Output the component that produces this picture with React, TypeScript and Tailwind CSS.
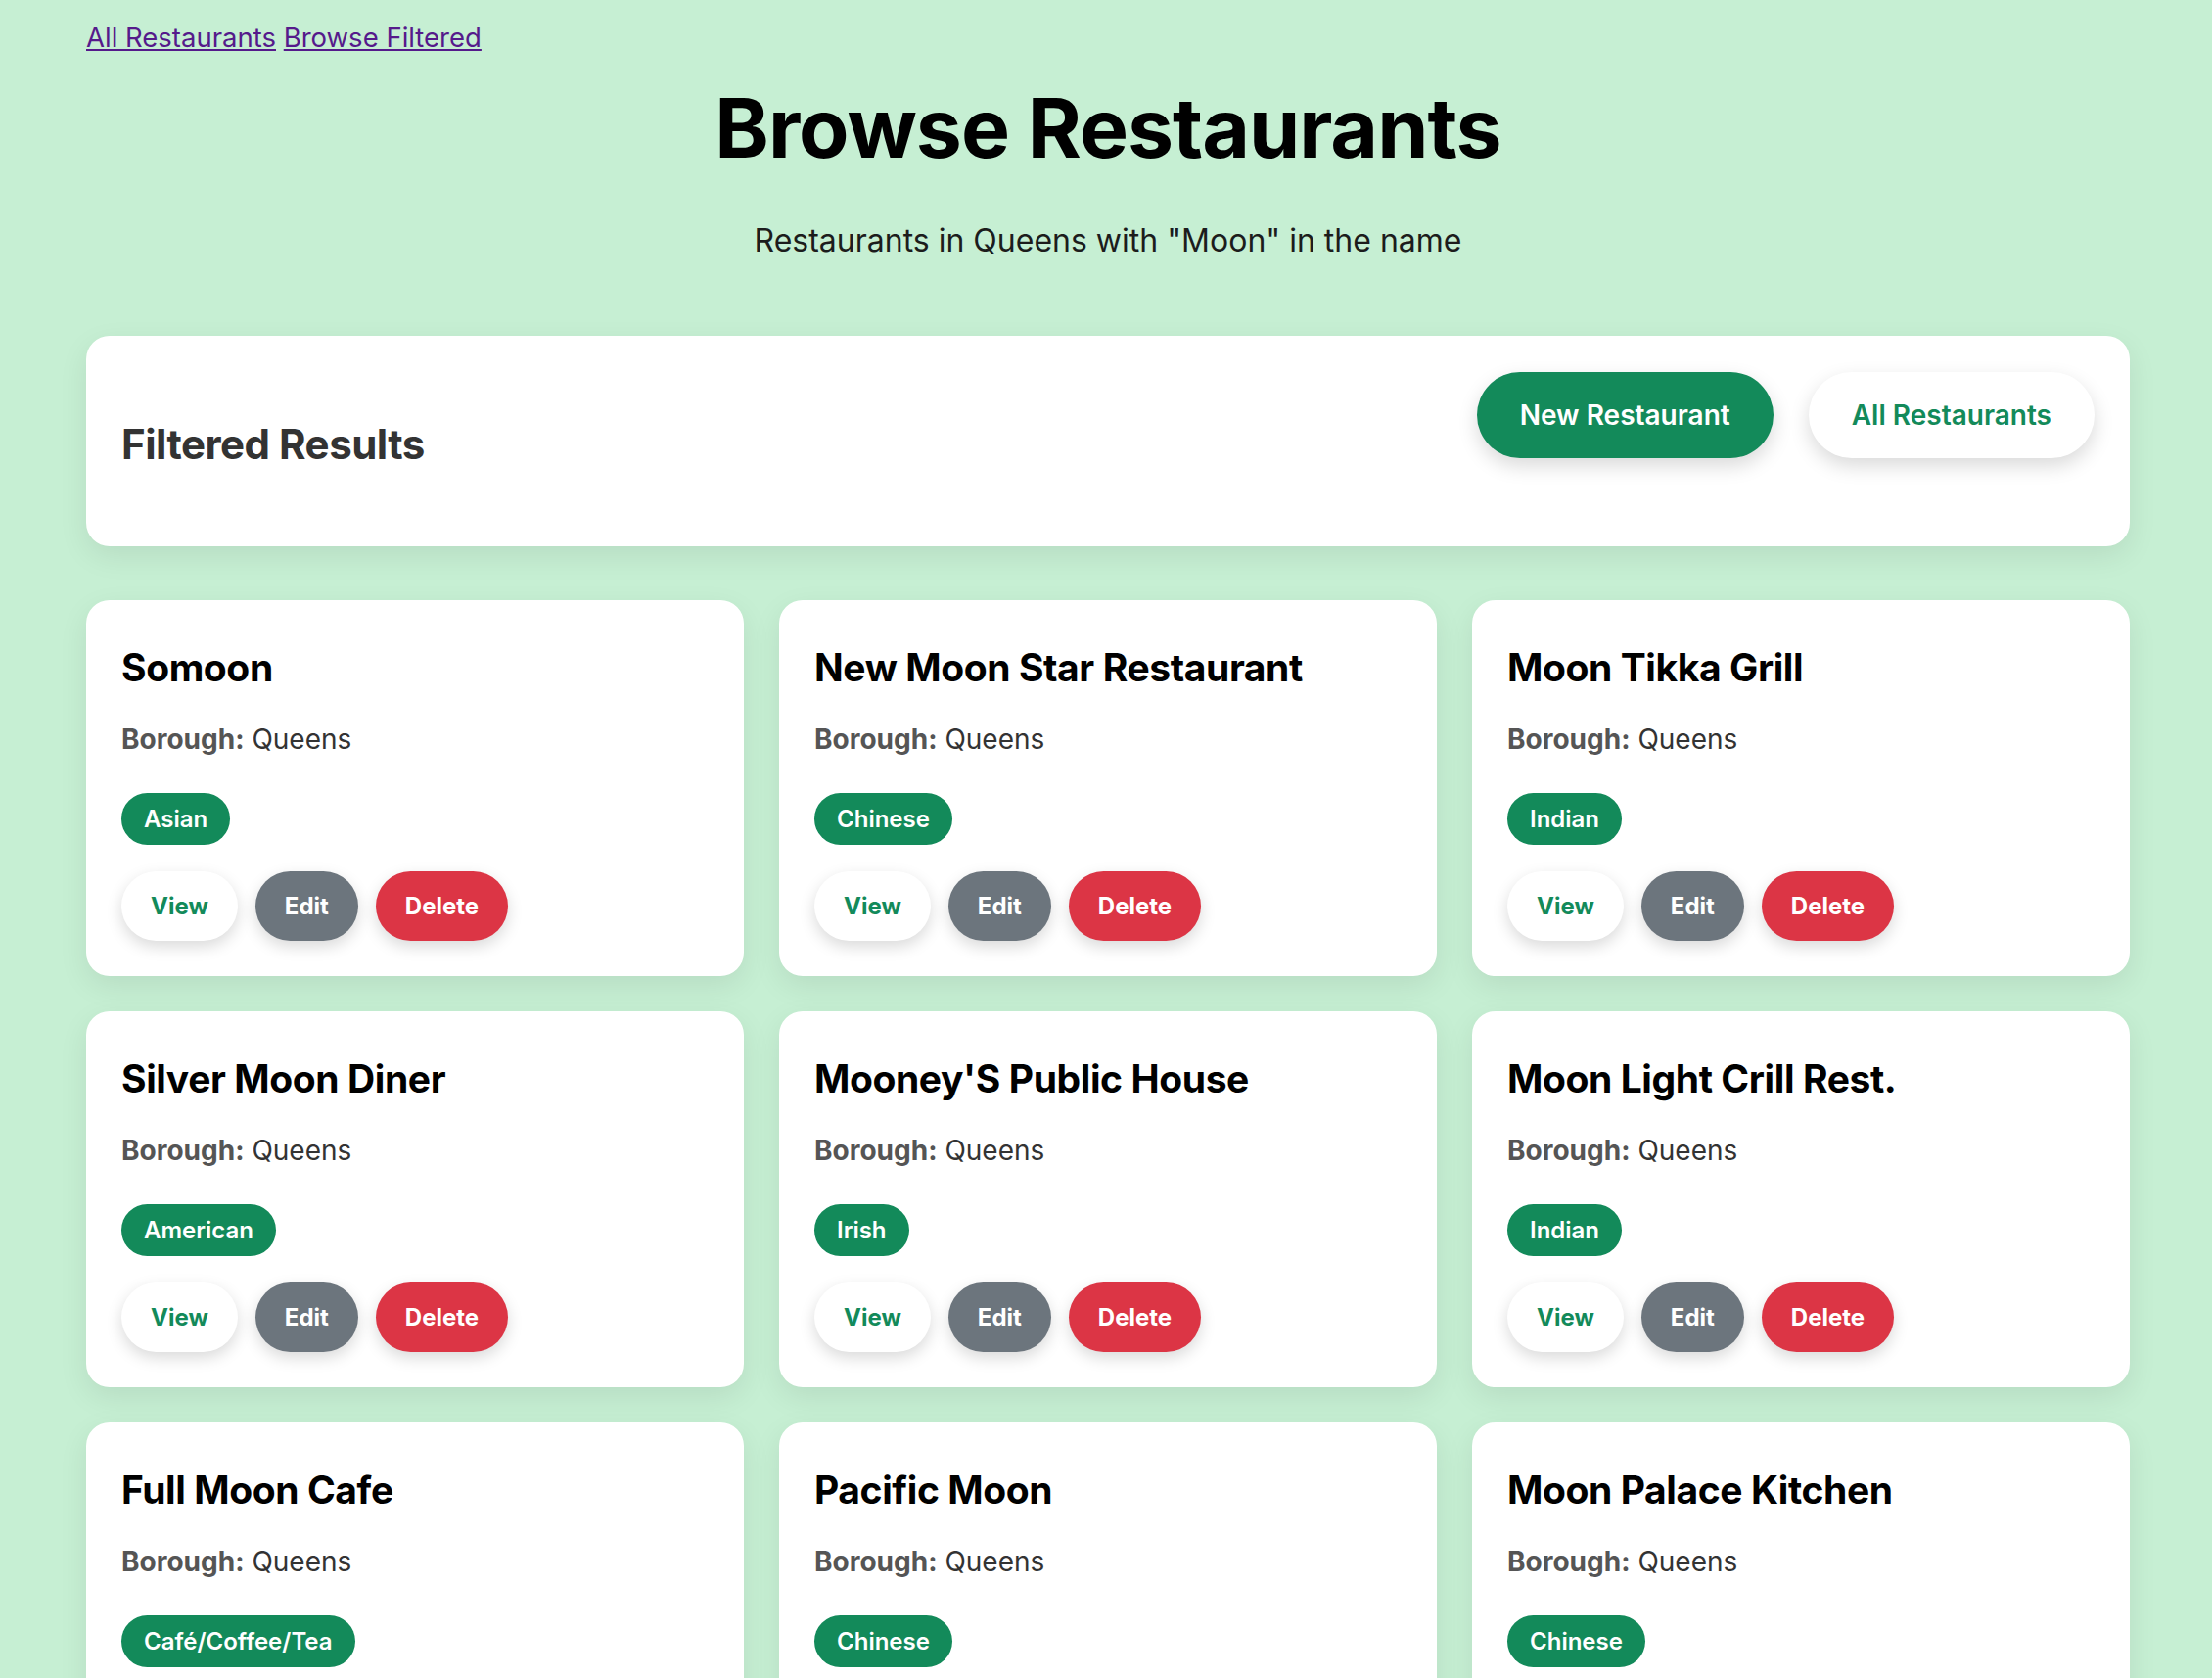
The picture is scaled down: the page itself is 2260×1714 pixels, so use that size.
import React from "react";

type R = { name: string; cuisine: string };

const restaurants: R[] = [
  { name: "Somoon", cuisine: "Asian" },
  { name: "New Moon Star Restaurant", cuisine: "Chinese" },
  { name: "Moon Tikka Grill", cuisine: "Indian" },
  { name: "Silver Moon Diner", cuisine: "American" },
  { name: "Mooney'S Public House", cuisine: "Irish" },
  { name: "Moon Light Crill Rest.", cuisine: "Indian" },
  { name: "Full Moon Cafe", cuisine: "Café/Coffee/Tea" },
  { name: "Pacific Moon", cuisine: "Chinese" },
  { name: "Moon Palace Kitchen", cuisine: "Chinese" },
];

function Card({ r }: { r: R }) {
  return (
    <div className="bg-white rounded-[24px] px-[36px] pt-[45px] pb-[36px] shadow-[0_10px_30px_rgba(0,0,0,0.08)]">
      <h3 className="text-[39px] leading-[48px] font-bold text-black tracking-[-0.4px]">{r.name}</h3>
      <p className="mt-[28px] text-[28px] leading-[42px] text-[#333]">
        <strong className="font-bold text-[#555]">Borough:</strong> Queens
      </p>
      <div className="mt-[34px] flex">
        <span className="inline-flex items-center h-[53px] px-[23px] rounded-full bg-[#138a5a] text-white text-[24px] font-semibold">
          {r.cuisine}
        </span>
      </div>
      <div className="mt-[27px] flex gap-[18px]">
        <button className="h-[71px] px-[30px] rounded-full bg-white text-[#138a5a] text-[24px] font-bold shadow-[0_6px_16px_rgba(0,0,0,0.15)]">
          View
        </button>
        <button className="h-[71px] px-[30px] rounded-full bg-[#6c757d] text-white text-[24px] font-bold shadow-[0_6px_16px_rgba(0,0,0,0.15)]">
          Edit
        </button>
        <button className="h-[71px] px-[30px] rounded-full bg-[#dc3545] text-white text-[24px] font-bold shadow-[0_6px_16px_rgba(0,0,0,0.15)]">
          Delete
        </button>
      </div>
    </div>
  );
}

export default function App() {
  return (
    <div className="min-h-screen bg-[#c6efd3] font-['Inter',sans-serif] pt-[17px] pb-[60px]">
      <div className="ml-[88px] w-[2088px]">
        <nav className="text-[27.5px] leading-[42px]">
          <a href="#" className="underline text-[#551a8b]">All Restaurants</a>{" "}
          <a href="#" className="underline text-[#551a8b]">Browse Filtered</a>
        </nav>
        <h1 className="mt-[21px] text-center text-[84px] leading-[101px] font-bold text-black tracking-[-1px]">
          Browse Restaurants
        </h1>
        <p className="mt-[43px] text-center text-[32px] leading-[43px] text-[#1c1c1c]">
          Restaurants in Queens with "Moon" in the name
        </p>
        <div className="mt-[76px] h-[215px] bg-white rounded-[24px] shadow-[0_10px_30px_rgba(0,0,0,0.08)] px-[36px] pt-[37px] flex justify-between items-start">
          <h2 className="mt-[50px] text-[42px] leading-[48px] font-bold text-[#333] tracking-[-0.5px]">Filtered Results</h2>
          <div className="flex gap-[36px]">
            <button className="h-[88px] px-[44px] rounded-full bg-[#138a5a] text-white text-[28px] font-semibold shadow-[0_8px_20px_rgba(0,0,0,0.15)]">
              New Restaurant
            </button>
            <button className="h-[88px] px-[44px] rounded-full bg-white text-[#138a5a] text-[28px] font-semibold shadow-[0_8px_20px_rgba(0,0,0,0.15)]">
              All Restaurants
            </button>
          </div>
        </div>
        <div className="mt-[55px] grid grid-cols-3 gap-[36px]">
          {restaurants.map((r, i) => (
            <Card key={i} r={r} />
          ))}
        </div>
      </div>
    </div>
  );
}
